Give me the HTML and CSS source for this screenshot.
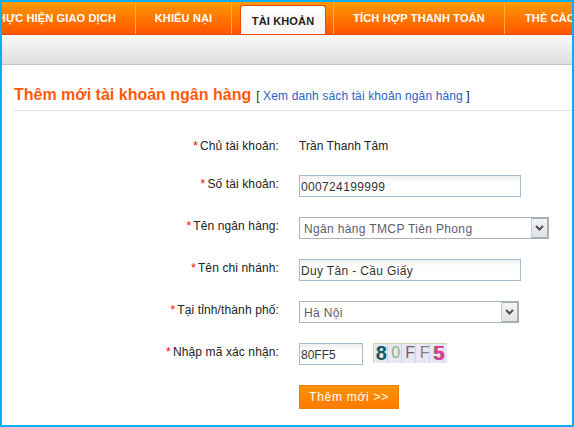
FILE: index.html
```html
<!DOCTYPE html>
<html lang="vi">
<head>
<meta charset="utf-8">
<title>Thêm mới tài khoản ngân hàng</title>
<link rel="stylesheet" href="styles.css">
</head>
<body>
<div class="frame">
  <nav class="nav">
    <a class="tab tab-first">THỰC HIỆN GIAO DỊCH</a>
    <a class="tab tab-second">KHIẾU NẠI</a>
    <a class="tab tab-active">TÀI KHOẢN</a>
    <a class="tab tab-fourth">TÍCH HỢP THANH TOÁN</a>
    <a class="tab tab-last">THẺ CÀO</a>
  </nav>
  <div class="subbar"></div>
  <main class="main">
    <header class="head">
      <h1 class="title">Thêm mới tài khoản ngân hàng</h1>
      <span class="crumb">[ <a class="crumb-link">Xem danh sách tài khoản ngân hàng</a> ]</span>
    </header>
    <form class="form">
      <label class="label label-first"><span class="req">*</span>Chủ tài khoản:</label>
      <div class="value">Trần Thanh Tâm</div>

      <label class="label"><span class="req">*</span>Số tài khoản:</label>
      <input class="input input-wide" value="000724199999">

      <label class="label"><span class="req">*</span>Tên ngân hàng:</label>
      <div class="select select-bank">
        <select class="select-el"><option>Ngân hàng TMCP Tiên Phong</option></select>
        <span class="arrow"><svg width="9" height="6" viewBox="0 0 9 6"><path d="M1 1 L4.5 4.5 L8 1" fill="none" stroke="#47525c" stroke-width="2"/></svg></span>
      </div>

      <label class="label"><span class="req">*</span>Tên chi nhánh:</label>
      <input class="input input-wide" value="Duy Tân - Cầu Giấy">

      <label class="label"><span class="req">*</span>Tại tỉnh/thành phố:</label>
      <div class="select select-city">
        <select class="select-el"><option>Hà Nội</option></select>
        <span class="arrow"><svg width="9" height="6" viewBox="0 0 9 6"><path d="M1 1 L4.5 4.5 L8 1" fill="none" stroke="#47525c" stroke-width="2"/></svg></span>
      </div>

      <label class="label"><span class="req">*</span>Nhập mã xác nhận:</label>
      <div class="captcha-row">
        <input class="input input-code" value="80FF5">
        <div class="captcha"><span class="c1">8</span><span class="c2">0</span><span class="c3">F</span><span class="c4">F</span><span class="c5">5</span></div>
      </div>

      <span></span>
      <button class="btn" type="button">Thêm mới &gt;&gt;</button>
    </form>
  </main>
</div>
</body>
</html>
```
FILE: styles.css
```css
* { box-sizing: border-box; }
html, body { margin: 0; padding: 0; }
body { width: 574px; height: 427px; overflow: hidden; background: #fff; font-family: "Liberation Sans", Arial, sans-serif; }
.frame { width: 574px; height: 427px; border: 2px solid #0aaef2; overflow: hidden; background: #fff; }

.nav { display: flex; height: 33px; align-items: flex-end; overflow: hidden; white-space: nowrap;
  background: linear-gradient(#ff9a00, #ff5500); border-bottom: 1px solid #e84a00; }
.tab { display: flex; align-items: center; justify-content: center; height: 32px; flex: none; color: #fff; font-size: 11px; font-weight: bold; letter-spacing: .15px; }
.tab-first { width: 134px; justify-content: flex-end; padding-right: 19px; border-right: 1px solid #ffab3d; }
.tab-second { width: 96px; border-right: 1px solid #ffab3d; margin-right: 8px; }
.tab-active { width: 86px; height: 30px; margin-right: 7px; margin-bottom: -1px; color: #222; background: linear-gradient(#fff, #f4f4f4); border: 1px solid #e84a00; border-bottom: 0; border-radius: 3px 3px 0 0; }
.tab-fourth { width: 172px; border-left: 1px solid #ffab3d; border-right: 1px solid #ffab3d; }
.tab-last { padding-left: 20px; }

.subbar { height: 30px; background: linear-gradient(#fafafa, #dedede); border-bottom: 1px solid #c4c4c4; }
.main { padding-top: 20px; }
.head { display: flex; align-items: baseline; gap: 5px; height: 26px; margin-left: 12px; border-bottom: 1px solid #e2e2e2; }
.title { margin: 0; font-size: 16px; font-weight: bold; color: #ff5a0a; line-height: 20px; }
.crumb { font-size: 12px; color: #222; letter-spacing: .13px; }
.crumb-link { color: #2a62c8; }

.form { display: grid; grid-template-columns: 277px 1fr; column-gap: 20px; row-gap: 20px; padding-top: 23px; font-size: 12px; color: #222; }
.label { display: block; text-align: right; line-height: 22px; height: 22px; margin-top: -2px; letter-spacing: .12px; }
.label-first, .value { margin-top: 1px; height: 20px; }
.req { color: #f00; margin-right: 2px; }
.value { line-height: 22px; letter-spacing: .05px; }

.input { display: block; height: 22px; padding: 2px 1px 0; border: 1px solid #a3bccf; font: 12px "Liberation Sans", Arial, sans-serif; letter-spacing: .35px; color: #333; background: linear-gradient(#efefef, #fff 6px); outline: none; }
.input-wide { width: 222px; }
.input-code { width: 64px; letter-spacing: 0; }

.select { position: relative; height: 22px; }
.select-bank { width: 250px; }
.select-city { width: 220px; }
.select-el { display: block; width: 100%; height: 22px; padding: 2px 0 0 4px; appearance: none; -webkit-appearance: none; border: 1px solid #a5b3bf; border-radius: 0; background: #fff; font: 12px "Liberation Sans", Arial, sans-serif; letter-spacing: .35px; color: #5d5d6d; outline: none; }
.arrow { position: absolute; top: 0; right: 0; bottom: 0; width: 18px; display: flex; align-items: center; justify-content: center; background: linear-gradient(#f4f4f4, #e2e2e2); border: 2px solid #a5b0b8; border-left: 1px solid #c8ced2; }

.captcha-row { display: flex; gap: 10px; }
.captcha { width: 74px; height: 20px; display: flex; align-items: center; padding-left: 1px; overflow: hidden; font-weight: bold; font-size: 20px; line-height: 20px;
  background-color: #e7e8f4;
  background-image: linear-gradient(#c9dcb0 1px, transparent 1px), linear-gradient(90deg, #c9dcc3 1px, transparent 1px); background-size: 74px 20px, 14px 20px; }
.captcha span { width: 14.5px; text-align: center; }
.c1 { color: #0f5a68; }
.c2 { color: #8fae86; font-weight: normal; font-size: 16px; }
.c3 { color: #7a5570; font-weight: normal; font-size: 16px; }
.c4 { color: #80808a; font-weight: normal; font-size: 16px; }
.c5 { color: #e0389c; text-shadow: -1px 0 #6e8a4a; }

.btn { width: 100px; height: 24px; padding: 0; border: 1px solid #f07c00; background: linear-gradient(#ff9300, #ff7a00); color: #fff; font: 12px "Liberation Sans", Arial, sans-serif; letter-spacing: .72px; }
```
